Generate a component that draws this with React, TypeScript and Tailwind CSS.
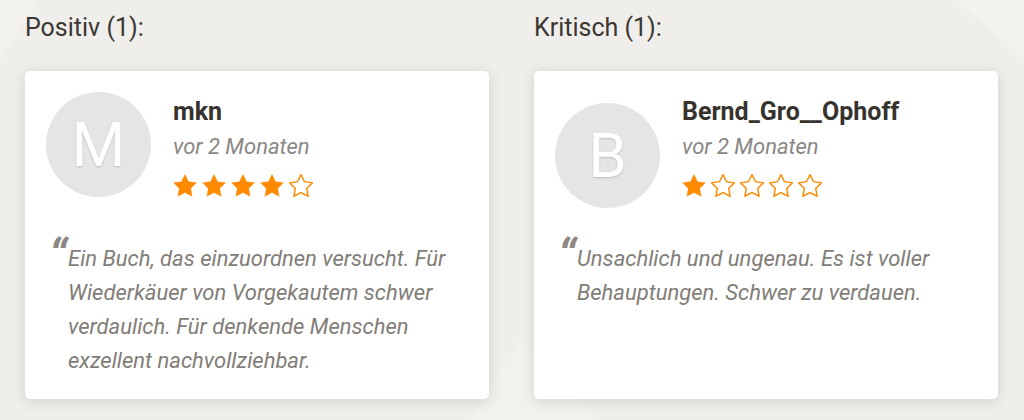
import React from "react";

const STAR =
  "12,2 15.09,8.26 22,9.27 17,14.14 18.18,21.02 12,17.77 5.82,21.02 7,14.14 2,9.27 8.91,8.26";

function Star({ filled }: { filled: boolean }) {
  return (
    <svg width="24" height="23" viewBox="1.5 1.5 21 20.2" className="block">
      <polygon
        points={STAR}
        fill={filled ? "#ff8a00" : "none"}
        stroke="#ff8a00"
        strokeWidth={filled ? 0.4 : 1.25}
        strokeLinejoin="miter"
      />
    </svg>
  );
}

function Stars({ n }: { n: number }) {
  return (
    <div className="mt-[10px] flex gap-[5px]">
      {[0, 1, 2, 3, 4].map((i) => (
        <Star key={i} filled={i < n} />
      ))}
    </div>
  );
}

type Review = {
  letter: string;
  name: string;
  date: string;
  rating: number;
  text: string;
  avatarOffset: string;
};

function Card({ r }: { r: Review }) {
  return (
    <div className="flex flex-1 flex-col rounded-[5px] bg-white p-[21px] shadow-[0_2px_14px_rgba(0,0,0,0.13)]">
      <div className="flex h-[106px] items-start gap-[22px]">
        <div
          className={
            "flex h-[105px] w-[105px] shrink-0 items-center justify-center rounded-full bg-[#e5e5e5] " +
            r.avatarOffset
          }
        >
          <span className="text-[62px] leading-none text-white [text-shadow:0_1px_2px_rgba(0,0,0,0.18)]">
            {r.letter}
          </span>
        </div>
        <div className="flex flex-col pt-[2px]">
          <div className="text-[25px] font-bold leading-[35px] text-[#36322e]">
            {r.name}
          </div>
          <div className="text-[22px] italic leading-[35px] text-[#8a8784]">
            {r.date}
          </div>
          <Stars n={r.rating} />
        </div>
      </div>
      <div className="relative mt-[44px] pl-[22px] pr-[2px]">
        <span className="absolute left-[3px] top-[-9px] text-[46px] font-bold italic leading-none text-[#8d8883]">
          “
        </span>
        <p className="text-[22px] italic leading-[34px] text-[#827d77]">
          {r.text}
        </p>
      </div>
    </div>
  );
}

export default function App() {
  const positive: Review = {
    letter: "M",
    name: "mkn",
    date: "vor 2 Monaten",
    rating: 4,
    text:
      "Ein Buch, das einzuordnen versucht. Für Wiederkäuer von Vorgekautem schwer verdaulich. Für denkende Menschen exzellent nachvollziehbar.",
    avatarOffset: "mt-0",
  };
  const critical: Review = {
    letter: "B",
    name: "Bernd_Gro__Ophoff",
    date: "vor 2 Monaten",
    rating: 1,
    text: "Unsachlich und ungenau. Es ist voller Behauptungen. Schwer zu verdauen.",
    avatarOffset: "mt-[11px]",
  };

  return (
    <div
      className="relative h-[420px] w-[1024px] overflow-hidden bg-[#efeeeb]"
      style={{ fontFamily: "Roboto, 'Liberation Sans', sans-serif" }}
    >
      <svg
        className="pointer-events-none absolute inset-0"
        width="1024"
        height="420"
        viewBox="0 0 1024 420"
      >
        <polygon points="0,0 40,0 0,60" fill="#f2f1ee" />
        <polygon points="955,0 1024,0 1024,58" fill="#f3f2ef" />
        <polygon points="470,420 520,340 600,420" fill="#f2f1ee" />
      </svg>
      <div className="relative grid grid-cols-[464px_464px] gap-x-[45px] px-[25px] pt-[11px]">
        <h2 className="text-[25px] leading-[34px] text-[#3a3632]">Positiv (1):</h2>
        <h2 className="text-[25px] leading-[34px] text-[#3a3632]">Kritisch (1):</h2>
        <div className="mt-[26px] flex">
          <Card r={positive} />
        </div>
        <div className="mt-[26px] flex">
          <Card r={critical} />
        </div>
      </div>
    </div>
  );
}
